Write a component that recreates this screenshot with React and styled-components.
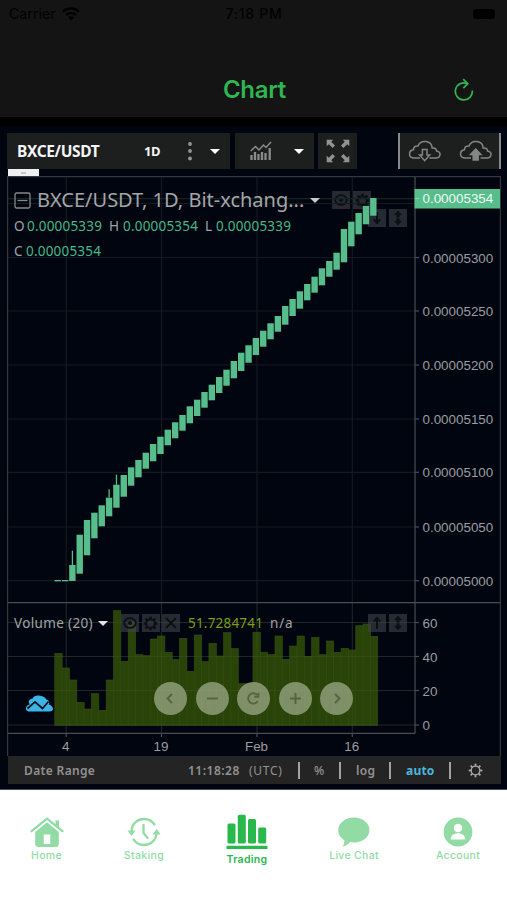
import React from "react";
import styled, { createGlobalStyle } from "styled-components";

const GlobalStyle = createGlobalStyle`
  * { box-sizing: border-box; }
  body { margin: 0; background: #fff; }
`;

const UI = '"Noto Sans", "Open Sans", sans-serif';
const AXIS = '"Liberation Sans", Arial, sans-serif';
const IOS = 'Inter, "Liberation Sans", sans-serif';

const Screen = styled.div`
  width: 507px;
  height: 900px;
  display: flex;
  flex-direction: column;
  overflow: hidden;
  background: #000;
  font-family: ${UI};
`;

const Header = styled.header`
  height: 117px;
  flex: none;
  background: #141414;
  display: flex;
  flex-direction: column;
`;

const StatusBar = styled.div`
  height: 28px;
  padding: 0 12px 0 9px;
  display: grid;
  grid-template-columns: 1fr auto 1fr;
  align-items: center;
  font: 500 14px/28px ${IOS};
  color: #020202;
`;

const Carrier = styled.div`
  display: flex;
  align-items: center;
  gap: 6px;
  font-weight: 400;
  letter-spacing: 0.1px;
`;

const Clock = styled.div`
  padding-left: 4px;
  letter-spacing: 0.7px;
`;

const Battery = styled.div`
  justify-self: end;
  width: 22px;
  height: 10px;
  border-radius: 3px;
  background: #000;
`;

const TitleBar = styled.div`
  flex: 1;
  display: grid;
  grid-template-columns: 1fr auto 1fr;
  align-items: center;
  margin-top: 1px;
  padding: 34px 33px 0 35px;
`;

const Title = styled.h1`
  grid-column: 2;
  margin: 0;
  font: 600 24px/30px ${IOS};
  letter-spacing: -0.3px;
  color: #30b651;
`;

const Refresh = styled.button`
  justify-self: end;
  padding: 0;
  border: 0;
  background: none;
  display: flex;
`;

const ChartPage = styled.main`
  height: 664px;
  flex: none;
  margin-top: 9px;
  padding: 7px 6px 0 7px;
  background: #00050f;
  border-bottom: 1px solid #4a4d52;
  display: flex;
  flex-direction: column;
`;

const Toolbar = styled.div`
  height: 36px;
  flex: none;
  display: flex;
  color: #f4f4f4;
  font-weight: 700;
`;

const ToolGroup = styled.div`
  width: ${(p) => p.$w}px;
  margin-right: ${(p) => p.$after || 0}px;
  padding-left: ${(p) => p.$pad || 0}px;
  height: 36px;
  background: #1d1e1e;
  display: flex;
  align-items: center;
  justify-content: ${(p) => p.$justify || "flex-start"};
`;

const CloudGroup = styled(ToolGroup)`
  margin-left: auto;
  border-left: 2px solid #87888b;
  border-right: 2px solid #87888b;
  padding: 0 6px 0 8px;
`;

const PairName = styled.span`
  width: 136px;
  padding-left: 10px;
  font-size: 15.5px;
  letter-spacing: -0.35px;
`;

const Interval = styled.span`
  width: 45px;
  padding-left: 1px;
  font-size: 13px;
  letter-spacing: -0.4px;
`;

const Caret = styled.span`
  width: 0;
  height: 0;
  border: 5px solid transparent;
  border-top-color: ${(p) => p.$color || "#fff"};
  border-bottom: 0;
  margin-left: ${(p) => p.$left || 0}px;
`;

const ScrollStrip = styled.div`
  height: 7px;
  width: 31px;
  flex: none;
  margin-left: 1px;
  background: #eef0f2;
  display: flex;
  align-items: center;
  justify-content: center;
  align-self: flex-start;
`;

const StripMark = styled.i`
  width: 5px;
  height: 2px;
  background: #c4c5c8;
`;

const ChartArea = styled.section`
  position: relative;
  z-index: 0;
  height: 580px;
  flex: none;
`;

const Plot = styled.svg`
  display: block;
`;

/* Legends and controls float over the plot; $under puts them behind the candles. */
const Overlay = styled.div`
  position: absolute;
  left: ${(p) => p.$x}px;
  top: ${(p) => p.$y}px;
  z-index: ${(p) => (p.$under ? -1 : 1)};
  height: ${(p) => p.$h}px;
  display: flex;
  align-items: center;
  gap: ${(p) => p.$gap || 0}px;
  white-space: nowrap;
`;

const SeriesTitle = styled.span`
  width: 279px;
  padding-left: 6px;
  font-size: 20px;
  line-height: 24px;
  color: #a5a6aa;
`;

const LegendText = styled.span`
  font-size: 13.5px;
  letter-spacing: ${(p) => p.$ls ?? 0.2}px;
  color: ${(p) => p.$color || "#a2a4a8"};
  width: ${(p) => (p.$w ? p.$w + "px" : "auto")};
`;

const ChipBox = styled.span`
  width: 18px;
  height: 18px;
  background: rgba(65, 69, 78, 0.58);
  display: flex;
  align-items: center;
  justify-content: center;
`;

const RoundButton = styled.button`
  width: 33px;
  height: 33px;
  padding: 0;
  border: 0;
  border-radius: 50%;
  background: rgba(158, 172, 137, 0.74);
  display: flex;
  align-items: center;
  justify-content: center;
`;

const Footer = styled.footer`
  height: 28px;
  flex: none;
  margin-left: 1px;
  padding-left: 16px;
  background: #242424;
  display: flex;
  align-items: center;
  font-size: 12px;
  font-weight: 600;
  color: #929292;
  white-space: nowrap;
`;

const FooterItem = styled.span`
  width: ${(p) => p.$w}px;
  padding-left: ${(p) => p.$pad || 0}px;
  letter-spacing: ${(p) => p.$ls || 0}px;
  color: ${(p) => p.$color || "inherit"};
  font-weight: ${(p) => p.$weight || "inherit"};
`;

const FooterRule = styled.i`
  width: 2px;
  height: 17px;
  background: #a2a2a2;
`;

const FooterIcon = styled.span`
  margin-left: 17px;
  display: flex;
`;

const TabBar = styled.nav`
  flex: 1;
  background: #fff;
  display: grid;
  grid-template-columns: 93px 102px 104px 110px 98px;
  align-items: start;
  padding-top: 24px;
`;

const Tab = styled.a`
  display: flex;
  flex-direction: column;
  align-items: center;
  margin-top: ${(p) => (p.$active ? "0" : "3px")};
  color: ${(p) => (p.$active ? "#29b84c" : "#93dba5")};
  font: ${(p) => (p.$active ? 600 : 500)} 10.5px/14px ${IOS};
  letter-spacing: ${(p) => p.$ls ?? 0.3}px;

  svg {
    display: block;
    margin-bottom: ${(p) => (p.$active ? 3 : 2)}px;
  }
`;

/* Plot coordinates are page pixels; the view box shifts them into the chart area. */
const OX = 7;
const OY = 176;
const STEP = 7.34;

const candles = [
  [580, 581.3], [580, 581.3], [565, 581, 550.7], [534.7, 573.7], [520, 555.3],
  [512.7, 538.3], [505.3, 526.3], [497.7, 516.3, 489.3], [484.7, 507.7, 474.7],
  [475, 496.7], [467.3, 485.7], [460, 477.3], [452.7, 468.7], [444, 461.3],
  [436.7, 454], [429.7, 445.3], [422.3, 438.3], [415, 430.7], [406.3, 423.3],
  [399.7, 416], [392, 407.7], [384.7, 400.3], [377, 393], [369.7, 385.7],
  [361, 378.3], [352.7, 371], [345.3, 362.7], [338, 355], [330.7, 346.7],
  [323.3, 339.3], [316, 331.7], [306, 324.7], [299, 316], [291.3, 308.7],
  [284, 300.3], [276.7, 292.7], [268.3, 285.3], [261, 276.7], [252.7, 269.7],
  [229, 262.3], [221.7, 246.3], [213, 234.3], [206, 224.3], [198, 215.7],
];

const volumes = [
  653.3, 668, 680, 702.3, 709, 693.7, 710.3, 680, 610.7, 661.3, 621.7, 654.7,
  655.7, 639, 636, 652.3, 659.3, 638.3, 671.3, 635, 661.7, 643.3, 656, 632.7,
  648.5, 683.7, 683.7, 632.2, 652.2, 654.5, 636, 659.2, 646, 636, 656.3, 637.3,
  654.7, 641, 652.3, 648.3, 650, 625.7, 624, 636.3,
];

const prices = [
  [257.5, "0.00005300"], [311, "0.00005250"], [365, "0.00005200"],
  [419, "0.00005150"], [472.3, "0.00005100"], [527, "0.00005050"],
  [580.7, "0.00005000"],
];
const volumeTicks = [[622.5, "60"], [656.5, "40"], [690.5, "20"], [725, "0"]];
const dates = [[66.2, "4"], [161.5, "19"], [257, "Feb"], [352.3, "16"]];

function ChartPlot() {
  return (
    <Plot width="494" height="580" viewBox={`${OX} ${OY} 494 580`}>
      <g stroke="#16191f" strokeWidth="1.2">
        {dates.map(([x]) => <line key={x} x1={x} x2={x} y1="177" y2="733" />)}
        {[[203.5], ...prices, ...volumeTicks].map(([y]) => (
          <line key={y} x1="8" x2="415" y1={y} y2={y} />
        ))}
      </g>
      <line x1="8" x2="415" y1="198.6" y2="198.6" stroke="#10281f" strokeWidth="1.2" />
      <g fill="#294308" stroke="#355113" strokeWidth="0.6">
        {volumes.map((y, i) => (
          <rect key={i} x={54.8 + i * STEP} y={y} width={STEP} height={725.3 - y} />
        ))}
      </g>
      <g stroke="#8ea078" strokeOpacity="0.1">
        {volumeTicks.map(([y]) => <line key={y} x1="8" x2="415" y1={y} y2={y} />)}
        {dates.map(([x]) => <line key={x} x1={x} x2={x} y1="603" y2="733" />)}
      </g>
      <g fill="#56bd8b">
        {candles.map(([top, bottom, wick], i) => {
          const x = 57.7 + i * STEP;
          return (
            <g key={i}>
              {wick && <rect x={x - 0.6} y={wick} width="1.3" height={top - wick} />}
              <rect x={x - 3.2} y={top} width="6.4" height={bottom - top} />
            </g>
          );
        })}
      </g>
      <g stroke="#4a4c51" strokeWidth="1.2" fill="none">
        <path d="M7.6 756V176.6H500.4V756" stroke="#35373c" />
        <path d="M8 602.6H500" />
        <path d="M415 177V733.4M8 733.4H415" />
        {[...prices, ...volumeTicks].map(([y]) => <path key={y} d={`M415 ${y}h4`} />)}
        {dates.map(([x]) => <path key={x} d={`M${x} 733v4`} />)}
      </g>
      <rect x="414.5" y="189" width="85.5" height="19.5" fill="#56bd8b" />
      <path d="M415 198.5h4" stroke="#8fd5b1" />
      <g fontFamily={AXIS} fontSize="13.4" fill="#9b9da1">
        <text x="422.5" y="203.4" fill="#f1faf5">0.00005354</text>
        {[...prices, ...volumeTicks].map(([y, label]) => (
          <text key={y} x="422.5" y={y + 5}>{label}</text>
        ))}
        {dates.map(([x, label]) => (
          <text key={x} x={x - 0.5} y="751" textAnchor="middle">{label}</text>
        ))}
      </g>
      <path d="M29.5 711.5C26.5 711.5 25 709 26.5 706.5C27.7 704.8 29 704.6 29.8 704.2C27.5 701.5 29.5 698.8 32.5 698.8C33.5 696 37 695 40 695.8C43 696 45.5 697.5 46.2 699.5C49 699.8 49.8 702.5 48.8 704.5C51 705 53.2 707 53 709.3C52.6 711 51 711.5 49.5 711.5Z" fill="#3cb4e7" />
      <path d="M27.5 708.5L35 701.8L42.5 708.5L48.5 701.5" fill="none" stroke="#00101a" strokeWidth="1.7" />
    </Plot>
  );
}

const SPOKES = [0, 45, 90, 135, 180, 225, 270, 315];

function Gear({ size, stroke, width }) {
  return (
    <svg width={size} height={size} viewBox="0 0 16 16" fill="none" stroke={stroke} strokeWidth={width}>
      <circle cx="8" cy="8" r="4.6" />
      {SPOKES.map((a) => (
        <path key={a} d="M8 3.6V0.7" strokeWidth={width * 1.4} transform={`rotate(${a} 8 8)`} />
      ))}
    </svg>
  );
}

const INK = "#0c1015";

function Chip({ kind }) {
  return (
    <ChipBox>
      {kind === "gear" ? (
        <Gear size={15} stroke={INK} width={2} />
      ) : (
        <svg width="16" height="16" viewBox="0 0 16 16" fill="none" stroke={INK} strokeWidth="1.8">
          {kind === "eye" && (
            <>
              <path d="M2 8C4 1.5 12 1.5 14 8C12 14.5 4 14.5 2 8Z" />
              <circle cx="8" cy="8" r="1.2" fill={INK} />
            </>
          )}
          {kind === "close" && <path d="M3 3l10 10M13 3L3 13" />}
          {kind === "up" && <path d="M8 14V4M4.8 6.5L8 3l3.2 3.5" strokeWidth="2" />}
          {kind === "down" && <path d="M8 2v10M4.8 9.5L8 13l3.2-3.5" strokeWidth="2" />}
          {kind === "stretch" && (
            <path d="M8 1l3.4 3.8H9.2v2.5H6.8V4.8H4.6zM8 15l3.4-3.8H9.2V8.7H6.8v2.5H4.6z" fill={INK} stroke={INK} strokeWidth="0.6" />
          )}
        </svg>
      )}
    </ChipBox>
  );
}

const controls = [
  ["Scroll left", "M10 4L5.5 8.5l4.5 4.5"],
  ["Zoom out", "M3 8.5h11"],
  ["Reset", "M12.7 11.3A5.2 5.2 0 1 1 12.3 5M13.4 2.8v3.9H9.3"],
  ["Zoom in", "M3 8.5h11M8.5 3v11"],
  ["Scroll right", "M7 4l4.5 4.5L7 13"],
];

function Cloud({ up }) {
  return (
    <svg width="34" height="24" viewBox="0 0 34 24" fill="none" stroke="#858585" strokeWidth="1.5">
      <path d="M12 19H6.5C3.5 19 1.5 17.5 1.5 15C1.5 12.5 3.4 11 5.5 10.7C5.5 8 7.5 6.5 10 7C11.5 3.5 14.5 2 18 2.5C21.5 3 24 5.5 24.2 9C27 8.5 28.5 10 28.5 12C31 12.5 32.3 14 32 16C31.7 18 30 19 28 19H21.5" />
      {up ? (
        <path d="M16.7 10L11.5 15.5h2.7V21h5v-5.5h2.7z" fill="#858585" />
      ) : (
        <path d="M14.4 10.5H19V16h2.7l-5 5.7L11.6 16h2.8z" />
      )}
    </svg>
  );
}

function IndicatorIcon() {
  return (
    <svg width="22" height="20" viewBox="0 0 22 20" fill="none" stroke="#8a8a8a">
      <path d="M0.7 10L5.5 5.5L9 9L13.5 4L16 6.5L21 1" strokeWidth="1.5" />
      <path d="M1.5 19v-5M5 19v-8M8.5 19v-6M12 19V11M15.5 19v-7M19.7 19V7" strokeWidth="2.3" />
    </svg>
  );
}

function ExpandIcon() {
  return (
    <svg width="24" height="24" viewBox="0 0 24 24" fill="#929292">
      {[0, 90, 180, 270].map((a) => (
        <path key={a} d="M0.7 0.7H7.3L5.2 2.8L9 6.6L6.6 9L2.8 5.2L0.7 7.3Z" transform={`rotate(${a} 12 12)`} />
      ))}
    </svg>
  );
}

function HomeIcon() {
  return (
    <svg width="34" height="30" viewBox="0 0 34 30" fill="currentColor">
      <path d="M1.6 14.2L17 1.6L32.400 14.200" fill="none" stroke="currentColor" strokeWidth="2.3" strokeLinejoin="round" strokeLinecap="round" />
      <path d="M25.5 3.5H29v7.2l-3.5-3z" />
      <path fillRule="evenodd" d="M17 5.300L28.800 15V27a3 3 0 0 1-3 3H8.200a3 3 0 0 1-3-3V15zM13.7 17.500V27h6.600v-9.500z" />
    </svg>
  );
}

function StakingIcon() {
  return (
    <svg width="34" height="30" viewBox="0 0 34 30" fill="none" stroke="currentColor" strokeWidth="2.3">
      <path d="M4.5 14C5 6.500 10.500 2 17 2c4.500 0 8.500 2 10.800 6.300" />
      <path d="M29.500 16C29 23.500 23.500 28 17 28c-4.500 0-8.500-2-10.800-6.300" />
      <path d="M16.500 8v8l4 5" strokeLinecap="round" strokeLinejoin="round" />
      <path d="M0.500 13.500h8L4.700 19zM25.500 17.500h8L29.800 12z" fill="currentColor" stroke="none" />
    </svg>
  );
}

function TradingIcon() {
  return (
    <svg width="42" height="36" viewBox="0 0 42 36" fill="currentColor">
      <rect x="1.5" y="9.5" width="8" height="20" rx="1.5" />
      <rect x="11.8" y="0.7" width="8" height="28.800" rx="1.5" />
      <rect x="22" y="5" width="8" height="24.5" rx="1.5" />
      <rect x="32.2" y="13.500" width="8" height="16" rx="1.5" />
      <rect x="0.5" y="31.800" width="41" height="3.300" rx="0.6" />
    </svg>
  );
}

function ChatIcon() {
  return (
    <svg width="34" height="30" viewBox="0 0 34 30" fill="currentColor">
      <path d="M17 0.5C25.500 0.500 32.500 6 32.500 13S25.500 25.500 17 25.500C15.500 25.500 14 25.300 13 25.100C11 27.500 8.500 29.300 5.500 29.800C6.800 28 7.500 26 7.300 23.300C3.500 21 1.200 17.500 1.200 13C1.200 6 8.500 0.500 17 0.500Z" />
    </svg>
  );
}

function AccountIcon() {
  return (
    <svg width="30" height="30" viewBox="0 0 30 30" fill="currentColor">
      <circle cx="15" cy="15" r="14.4" />
      <circle cx="15" cy="11" r="4.2" fill="#fff" />
      <path d="M7.700 22.500C7.700 18.500 11 16.300 15 16.300S22.300 18.500 22.300 22.500Z" fill="#fff" />
    </svg>
  );
}

const GREEN = "#46b98a";

export default function App() {
  return (
    <>
      <GlobalStyle />
      <Screen>
        <Header>
          <StatusBar>
            <Carrier>
              Carrier
              <svg width="18" height="14" viewBox="0 0 18 14" fill="none" stroke="#000" strokeWidth="2.4">
                <path d="M1 4.700C5.500.5 12.500.5 17 4.700M4 8c2.800-2.500 7.200-2.500 10 0" />
                <path d="M6 10.400c1.700-1.500 4.300-1.500 6 0L9 13.500z" fill="#000" stroke="none" />
              </svg>
            </Carrier>
            <Clock>7:18 PM</Clock>
            <Battery />
          </StatusBar>
          <TitleBar>
            <Title>Chart</Title>
            <Refresh aria-label="Refresh">
              <svg width="20" height="24" viewBox="0 0 20 24" fill="none" stroke="#30b651" strokeWidth="1.7">
                <path d="M18.300 12.500A8.500 8.500 0 1 1 13.200 5.600" />
                <path d="M9.200 1.200l4.600 4.500L9.300 10.200" />
              </svg>
            </Refresh>
          </TitleBar>
        </Header>

        <ChartPage>
          <Toolbar>
            <ToolGroup $w={223} $after={5}>
              <PairName>BXCE/USDT</PairName>
              <Interval>1D</Interval>
              <svg width="4" height="20" fill="#96969a">
                <circle cx="2" cy="3" r="1.9" />
                <circle cx="2" cy="10" r="1.9" />
                <circle cx="2" cy="17.5" r="1.9" />
              </svg>
              <Caret $left={18} />
            </ToolGroup>
            <ToolGroup $w={79} $after={4} $pad={15}>
              <IndicatorIcon />
              <Caret $left={22} />
            </ToolGroup>
            <ToolGroup $w={39} $justify="center">
              <ExpandIcon />
            </ToolGroup>
            <CloudGroup $w={103} $justify="space-between">
              <Cloud />
              <Cloud up />
            </CloudGroup>
          </Toolbar>
          <ScrollStrip><StripMark /></ScrollStrip>

          <ChartArea>
            <ChartPlot />
            <Overlay $under $x={325} $y={15} $h={18} $gap={3}>
              <Chip kind="eye" />
              <Chip kind="gear" />
            </Overlay>
            <Overlay $under $x={361} $y={33} $h={18} $gap={3}>
              <Chip kind="down" />
              <Chip kind="stretch" />
            </Overlay>
            <Overlay $x={7} $y={12} $h={24}>
              <svg width="17" height="17" viewBox="0 0 17 17" fill="none" stroke="#85878c" strokeWidth="1.3">
                <rect x="1" y="1" width="15" height="15" rx="1.5" />
                <path d="M3.5 8.5h10" />
              </svg>
              <SeriesTitle>BXCE/USDT, 1D, Bit-xchang...</SeriesTitle>
              <Caret $color="#c9cacc" />
            </Overlay>
            <Overlay $x={7} $y={40} $h={20}>
              <LegendText $w={13}>O</LegendText>
              <LegendText $w={82} $color={GREEN}>0.00005339</LegendText>
              <LegendText $w={14}>H</LegendText>
              <LegendText $w={82} $color={GREEN}>0.00005354</LegendText>
              <LegendText $w={11}>L</LegendText>
              <LegendText $color={GREEN}>0.00005339</LegendText>
            </Overlay>
            <Overlay $x={7} $y={65} $h={20}>
              <LegendText $w={12}>C</LegendText>
              <LegendText $color={GREEN}>0.00005354</LegendText>
            </Overlay>
            <Overlay $x={114} $y={438} $h={18} $gap={2.5}>
              <Chip kind="eye" />
              <Chip kind="gear" />
              <Chip kind="close" />
            </Overlay>
            <Overlay $x={7} $y={437} $h={20}>
              <LegendText $w={84} $ls={0.35}>Volume (20)</LegendText>
              <Caret $color="#e4e4e6" />
              <LegendText $w={80} />
              <LegendText $w={82} $color="#7c9e14">51.7284741</LegendText>
              <LegendText $ls={0.8}>n/a</LegendText>
            </Overlay>
            <Overlay $x={361} $y={438} $h={18} $gap={3}>
              <Chip kind="up" />
              <Chip kind="stretch" />
            </Overlay>
            <Overlay $x={147} $y={506} $h={33} $gap={8.6}>
              {controls.map(([label, d]) => (
                <RoundButton key={label} aria-label={label}>
                  <svg width="17" height="17" fill="none" stroke="#56643f" strokeWidth="1.9">
                    <path d={d} />
                  </svg>
                </RoundButton>
              ))}
            </Overlay>
          </ChartArea>

          <Footer>
            <FooterItem $w={164} $ls={0.35}>Date Range</FooterItem>
            <FooterItem $w={61} $ls={0.5}>11:18:28</FooterItem>
            <FooterItem $w={49} $ls={0.7} $weight={400}>(UTC)</FooterItem>
            <FooterRule />
            <FooterItem $w={39} $pad={14} $weight={500}>%</FooterItem>
            <FooterRule />
            <FooterItem $w={48} $pad={15} $ls={0.3}>log</FooterItem>
            <FooterRule />
            <FooterItem $w={58} $pad={15} $ls={0.2} $color="#4ab7df" $weight={700}>auto</FooterItem>
            <FooterRule />
            <FooterIcon><Gear size={15} stroke="#a5a5a5" width={1.4} /></FooterIcon>
          </Footer>
        </ChartPage>

        <TabBar>
          <Tab><HomeIcon />Home</Tab>
          <Tab $ls={0.4}><StakingIcon />Staking</Tab>
          <Tab $active><TradingIcon />Trading</Tab>
          <Tab><ChatIcon />Live Chat</Tab>
          <Tab><AccountIcon />Account</Tab>
        </TabBar>
      </Screen>
    </>
  );
}
